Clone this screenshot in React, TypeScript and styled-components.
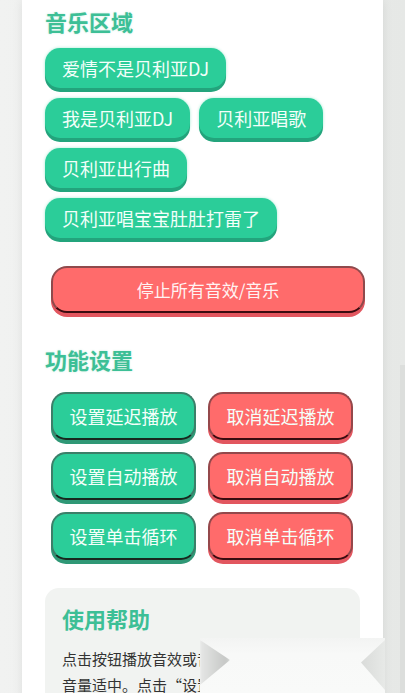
import React from 'react';
import styled, { createGlobalStyle, css } from 'styled-components';

const GlobalStyle = createGlobalStyle`
  html, body {
    margin: 0;
    padding: 0;
    background: #eceeec;
    font-family: "Noto Sans CJK SC", "Noto Sans", sans-serif;
    overflow: hidden;
  }
`;

const Page = styled.div`
  height: 693px;
  padding: 0 22px;
  box-sizing: border-box;
  overflow: hidden;
  background: linear-gradient(90deg, #f1f2f1 0%, #e6e8e6 100%);
`;

const Card = styled.div`
  background: #ffffff;
  min-height: 100%;
  padding: 8px 23px 20px;
  box-sizing: border-box;
  box-shadow: 0 0 10px rgba(0, 0, 0, 0.08);
`;

const SectionTitle = styled.h2<{ $top?: number }>`
  margin: ${(p) => p.$top || 0}px 0 0;
  font-size: 22px;
  line-height: 26px;
  font-weight: 700;
  color: #3dbf96;
  text-shadow: 0 0 2px rgba(61, 191, 150, 0.35);
`;

const MusicList = styled.div`
  margin-top: 14px;
  display: flex;
  flex-wrap: wrap;
  gap: 10px 9px;
`;

const MusicButton = styled.button`
  height: 40px;
  padding: 0 17px;
  border: none;
  border-radius: 15px;
  background: #2bcd99;
  color: #f3fffa;
  font-family: inherit;
  font-size: 18px;
  box-shadow: 0 4px 0 #23a47c, 0 0 3px rgba(43, 205, 153, 0.45);
`;

const raised = (face: string, edge: string, bottom: string, drop: string) => css`
  background: ${face};
  border: 2px solid ${edge};
  border-bottom-color: ${bottom};
  box-shadow: 0 4px 0 ${drop};
`;

const StopButton = styled.button`
  margin: 28px 0 0 6px;
  width: 314px;
  height: 47px;
  border-radius: 16px;
  color: #fff3f3;
  font-family: inherit;
  font-size: 17px;
  ${raised('#ff6b6b', '#8f4a4c', '#3a0c10', '#e2565f')}
`;

const SettingsGrid = styled.div`
  margin-top: 20px;
  padding-left: 6px;
  display: grid;
  grid-template-columns: 145px 145px;
  gap: 12px 12px;
`;

const SettingButton = styled.button<{ $tone: 'on' | 'off' }>`
  height: 48px;
  border-radius: 15px;
  color: #f4fffa;
  font-family: inherit;
  font-size: 18px;
  ${(p) =>
    p.$tone === 'on'
      ? raised('#2bcd99', '#3c7f69', '#17281f', '#2f9876')
      : raised('#ff6b6b', '#94484b', '#3a0c10', '#e2565f')}
`;

const HelpBox = styled.div`
  margin-top: 28px;
  padding: 16px 17px;
  border-radius: 14px;
  background: #f1f3f1;
`;

const HelpTitle = styled.h3`
  margin: 0;
  font-size: 22px;
  line-height: 28px;
  font-weight: 700;
  color: #3dbf96;
`;

const HelpText = styled.p`
  margin: 14px 0 0;
  font-size: 15px;
  line-height: 26px;
  color: #333;
`;

/* system gesture overlay lying over the bottom of the page */
const Gesture = styled.div`
  position: fixed;
  left: 200px;
  top: 638px;
  width: 185px;
  height: 55px;
  background: linear-gradient(180deg, #f3f4f3 0%, #f8f9f8 30%, #f9faf9 100%);

  &::before,
  &::after {
    content: '';
    position: absolute;
    top: 2px;
    height: 50px;
  }

  &::before {
    left: 0;
    width: 30px;
    clip-path: polygon(0 0, 100% 40%, 0 90%);
    background: linear-gradient(90deg, #e6e7e6 0%, #c6c8c6 85%, #d4d5d4 100%);
    filter: blur(1px);
  }

  &::after {
    right: 0;
    width: 24px;
    clip-path: polygon(100% 0, 0 45%, 100% 100%);
    background: linear-gradient(90deg, #d9dbd9 0%, #e7e9e7 100%);
  }
`;

const ScrollThumb = styled.div`
  position: fixed;
  right: 0;
  top: 365px;
  width: 5px;
  height: 328px;
  background: #dcdedc;
`;

const music = ['爱情不是贝利亚DJ', '我是贝利亚DJ', '贝利亚唱歌', '贝利亚出行曲', '贝利亚唱宝宝肚肚打雷了'];

const settings = ['延迟播放', '自动播放', '单击循环'];

export default function App() {
  return (
    <>
      <GlobalStyle />
      <Page>
        <Card>
          <SectionTitle>音乐区域</SectionTitle>
          <MusicList>
            {music.map((m) => (
              <MusicButton key={m}>{m}</MusicButton>
            ))}
          </MusicList>
          <StopButton>停止所有音效/音乐</StopButton>

          <SectionTitle $top={33}>功能设置</SectionTitle>
          <SettingsGrid>
            {settings.map((s) => (
              <React.Fragment key={s}>
                <SettingButton $tone="on">设置{s}</SettingButton>
                <SettingButton $tone="off">取消{s}</SettingButton>
              </React.Fragment>
            ))}
          </SettingsGrid>

          <HelpBox>
            <HelpTitle>使用帮助</HelpTitle>
            <HelpText>
              点击按钮播放音效或音乐，建议您将手机音量适中。点击“设置延迟播放”后，再点击按钮会延迟播放。
            </HelpText>
          </HelpBox>
        </Card>
      </Page>
      <Gesture />
      <ScrollThumb />
    </>
  );
}
